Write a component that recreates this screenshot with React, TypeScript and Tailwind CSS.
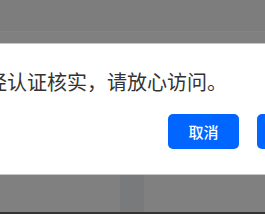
export default function App() {
  return (
    <div
      className="w-[265px] h-[214px] overflow-hidden bg-[#808080] flex flex-col"
      style={{ fontFamily: '"Noto Sans CJK SC", "Noto Sans", sans-serif' }}
    >
      {/* page header behind overlay */}
      <div className="h-[32px] bg-[#7d7d7d] border-b border-[#858585]" />
      <div className="h-[11px]" />

      {/* dialog */}
      <div className="h-[132px] bg-white border-y border-[#c6c6c6] flex flex-col">
        <p className="mt-[28px] ml-[-13px] whitespace-nowrap text-[20px] leading-[20px] text-[#333333]">
          经认证核实，请放心访问。
        </p>
        <div className="mt-[22px] ml-[168px] flex gap-[18px]">
          <button className="w-[71px] h-[35px] shrink-0 rounded-[5px] bg-[#0066ff] text-white text-[15px] leading-[35px] font-medium">
            取消
          </button>
          <button className="w-[71px] h-[35px] shrink-0 rounded-[5px] bg-[#0066ff] text-white text-[15px] leading-[35px] font-medium">
            确定
          </button>
        </div>
      </div>

      {/* page content behind overlay */}
      <div className="flex-1 flex">
        <div className="w-[120px]" />
        <div className="w-[24px] bg-[#797a7c]" />
      </div>
      <div className="h-[2px] bg-[#333333]" />
    </div>
  );
}
